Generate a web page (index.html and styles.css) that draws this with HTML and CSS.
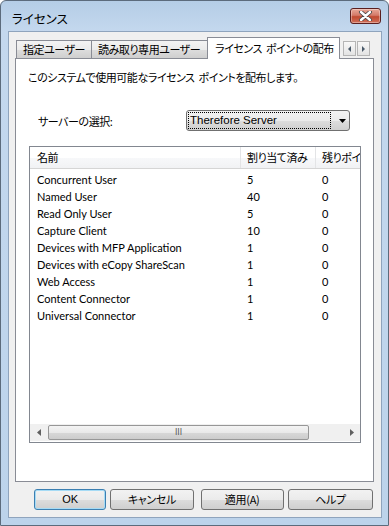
FILE: index.html
```html
<!DOCTYPE html>
<html lang="ja">
<head>
<meta charset="utf-8">
<title>ライセンス</title>
<link rel="stylesheet" href="styles.css">
</head>
<body>
<div class="window">
  <div class="titlebar">
    <span class="title">ライセンス</span>
    <span class="close">
      <svg width="17" height="10" viewBox="0 0 17 10">
        <path d="M4 1 L13 9 M13 1 L4 9" stroke="#444" stroke-width="4" stroke-linecap="round"/>
        <path d="M4 1 L13 9 M13 1 L4 9" stroke="#fff" stroke-width="2.4" stroke-linecap="round"/>
      </svg>
    </span>
  </div>
  <div class="client">
    <div class="tabs">
      <div class="tab t1">指定ユーザー</div>
      <div class="tab t2">読み取り専用ユーザー</div>
      <div class="tab sel">ライセンス ポイントの配布</div>
      <div class="tabscroll">
        <span class="sb"><svg width="5" height="6" viewBox="0 0 5 6"><path d="M4 0 L1 3 L4 6 Z" fill="#4a5a6a"/></svg></span>
        <span class="sb"><svg width="5" height="6" viewBox="0 0 5 6"><path d="M1 0 L4 3 L1 6 Z" fill="#4a5a6a"/></svg></span>
      </div>
    </div>
    <div class="panel">
      <p class="intro">このシステムで使用可能なライセンス ポイントを配布します。</p>
      <div class="server">
        <span class="label">サーバーの選択:</span>
        <div class="combo">
          <span class="focus">Therefore Server</span>
          <svg class="arrow" width="7" height="4" viewBox="0 0 7 4"><path d="M0 0 H7 L3.5 4 Z" fill="#000"/></svg>
        </div>
      </div>
      <div class="list">
        <div class="head">
          <div class="c1">名前</div>
          <div class="c2">割り当て済み</div>
          <div class="c3">残りポイ</div>
        </div>
        <div class="rows">
          <div class="row"><div class="c1">Concurrent User</div><div class="c2">5</div><div class="c3">0</div></div>
          <div class="row"><div class="c1">Named User</div><div class="c2">40</div><div class="c3">0</div></div>
          <div class="row"><div class="c1">Read Only User</div><div class="c2">5</div><div class="c3">0</div></div>
          <div class="row"><div class="c1">Capture Client</div><div class="c2">10</div><div class="c3">0</div></div>
          <div class="row"><div class="c1">Devices with MFP Application</div><div class="c2">1</div><div class="c3">0</div></div>
          <div class="row"><div class="c1">Devices with eCopy ShareScan</div><div class="c2">1</div><div class="c3">0</div></div>
          <div class="row"><div class="c1">Web Access</div><div class="c2">1</div><div class="c3">0</div></div>
          <div class="row"><div class="c1">Content Connector</div><div class="c2">1</div><div class="c3">0</div></div>
          <div class="row"><div class="c1">Universal Connector</div><div class="c2">1</div><div class="c3">0</div></div>
        </div>
        <div class="hscroll">
          <span class="harrow"><svg width="4" height="7" viewBox="0 0 4 7"><path d="M4 0 L0 3.5 L4 7 Z" fill="#606060"/></svg></span>
          <div class="thumb"><span class="grip">III</span></div>
          <span class="spacer"></span>
          <span class="harrow"><svg width="4" height="7" viewBox="0 0 4 7"><path d="M0 0 L4 3.5 L0 7 Z" fill="#606060"/></svg></span>
        </div>
      </div>
    </div>
    <div class="buttons">
      <button class="btn ok">OK</button>
      <button class="btn cancel">キャンセル</button>
      <button class="btn apply">適用(A)</button>
      <button class="btn help">ヘルプ</button>
    </div>
  </div>
</div>
</body>
</html>
```

FILE: styles.css
```css
html, body {
  margin: 0;
  padding: 0;
  background: #ffffff;
}
body {
  width: 389px;
  height: 526px;
  overflow: hidden;
  font-family: "Liberation Sans", "Noto Sans CJK JP", sans-serif;
  font-size: 12px;
  color: #000;
}
.window {
  box-sizing: border-box;
  width: 389px;
  height: 526px;
  border: 1px solid #5c6b7c;
  border-radius: 6px 6px 0 0;
  background: linear-gradient(to bottom, #b5cde6 0px, #c4d8ee 30px, #bcd3eb 100%);
  padding: 0 6px 7px 7px;
  display: flex;
  flex-direction: column;
}
.titlebar {
  height: 30px;
  display: flex;
  align-items: center;
  justify-content: space-between;
  flex: none;
}
.title {
  font-family: "Noto Sans CJK JP", sans-serif;
  font-size: 12.5px;
  margin-left: 4px;
  margin-top: 4px;
  font-feature-settings: "palt";
  color: #000;
}
.close {
  width: 31px;
  height: 16px;
  box-sizing: border-box;
  margin-right: 1px;
  margin-bottom: 1px;
  border: 1px solid #5a1f1f;
  border-radius: 3px;
  background: linear-gradient(to bottom, #e8a898 0%, #d47a68 45%, #c04a30 55%, #d0705a 100%);
  display: flex;
  align-items: center;
  justify-content: center;
  box-shadow: inset 0 0 0 1px rgba(255,255,255,0.35);
}
.close svg { display: block; }
.client {
  flex: 1;
  background: #f0f0f0;
  border: 1px solid #8fa4bd;
  display: flex;
  flex-direction: column;
  padding: 5px 8px 0 5px;
  font-family: "Noto Sans CJK JP", sans-serif;
  font-feature-settings: "palt";
  font-size: 11px;
  letter-spacing: -0.45px;
  word-spacing: 2px;
}
.tabs {
  height: 21px;
  display: flex;
  align-items: flex-end;
  padding-left: 2px;
  position: relative;
  z-index: 1;
  flex: none;
}
.tab {
  box-sizing: border-box;
  height: 18px;
  border: 1px solid #898c95;
  border-bottom: none;
  background: linear-gradient(to bottom, #f3f3f3 0%, #ebebeb 50%, #dddddd 51%, #cfcfcf 100%);
  padding: 0 0 0 6px;
  line-height: 16px;
  font-size: 11px;
  white-space: nowrap;
  margin-right: -1px;
  overflow: hidden;
}
.t1 { width: 76px; }
.t2 { width: 118px; }
.tab.sel {
  height: 22px;
  margin-bottom: -1px;
  background: #ffffff;
  width: 133px;
  line-height: 20px;
  padding: 0 0 0 7px;
  border-color: #898c95;
  margin-left: -1px;
}
.tabscroll {
  display: flex;
  margin-left: 4px;
  margin-bottom: 2px;
  gap: 1px;
}
.sb {
  box-sizing: border-box;
  width: 13px;
  height: 15px;
  border: 1px solid #b5b5b5;
  background: linear-gradient(to bottom, #f8f8f8, #e3e3e3);
  display: flex;
  align-items: center;
  justify-content: center;
}
.sb svg { display: block; }
.panel {
  box-sizing: border-box;
  width: 359px;
  height: 424px;
  margin-left: 1px;
  background: #ffffff;
  border: 1px solid #898c95;
  padding: 10px 12px 0 12px;
  flex: none;
}
.intro {
  margin: 0;
  line-height: 17px;
  height: 17px;
  font-size: 11px;
}
.server {
  display: flex;
  align-items: center;
  margin-top: 24px;
  height: 21px;
}
.label {
  width: 158px;
  padding-left: 10px;
  box-sizing: border-box;
  font-size: 11px;
}
.combo {
  box-sizing: border-box;
  width: 164px;
  height: 21px;
  border: 1px solid #707070;
  border-radius: 3px;
  background: linear-gradient(to bottom, #f2f2f2 0%, #ebebeb 50%, #dddddd 51%, #cfcfcf 100%);
  display: flex;
  align-items: center;
  padding: 0 0 0 1px;
  letter-spacing: 0;
  word-spacing: 0;
}
.focus {
  box-sizing: border-box;
  width: 143px;
  height: 17px;
  border: 1px dotted #000;
  font-family: "Liberation Sans", sans-serif;
  font-size: 11.5px;
  line-height: 15px;
  padding-left: 1px;
}
.arrow {
  margin-left: 8px;
  display: block;
}
.list {
  box-sizing: border-box;
  width: 332px;
  height: 297px;
  margin-left: 1px;
  margin-top: 15px;
  border: 1px solid #828790;
  display: flex;
  flex-direction: column;
  overflow: hidden;
}
.head {
  display: flex;
  height: 22px;
  flex: none;
  background: linear-gradient(to bottom, #ffffff 0%, #ffffff 50%, #f7f8fa 51%, #f1f2f4 100%);
  border-bottom: 1px solid #d5d5d5;
  box-sizing: border-box;
}
.head > div {
  line-height: 21px;
  font-size: 11px;
  box-sizing: border-box;
  border-right: 1px solid #e3e4e6;
  white-space: nowrap;
  overflow: hidden;
}
.c1 { width: 211px; padding-left: 7px; flex: none; }
.c2 { width: 75px; padding-left: 6px; flex: none; }
.c3 { width: 60px; padding-left: 6px; flex: none; }
.head > .c3 { border-right: none; }
.rows {
  flex: 1;
  padding-top: 2px;
}
.row {
  display: flex;
  height: 17px;
  line-height: 17px;
  font-family: "Lato", "Liberation Sans", sans-serif;
  font-size: 11px;
  letter-spacing: 0;
  word-spacing: 0;
  white-space: nowrap;
}
.row > div { box-sizing: border-box; }
.row .c1 { padding-left: 7px; }
.hscroll {
  height: 17px;
  flex: none;
  display: flex;
  align-items: center;
  background: #f0f0f0;
  margin-bottom: 1px;
}
.harrow {
  width: 17px;
  flex: none;
  display: flex;
  justify-content: center;
  align-items: center;
}
.harrow svg { display: block; }
.thumb {
  flex: none;
  width: 261px;
  height: 15px;
  box-sizing: border-box;
  border: 1px solid #979797;
  border-radius: 2px;
  background: linear-gradient(to bottom, #f4f4f4 0%, #e9e9e9 50%, #d8d8d8 51%, #cccccc 100%);
  display: flex;
  align-items: center;
  justify-content: center;
  margin-left: 1px;
}
.spacer { flex: 1; }
.grip {
  font-family: "DejaVu Sans", sans-serif;
  font-size: 8px;
  letter-spacing: 0;
  color: #555;
  line-height: 9px;
}
.buttons {
  display: flex;
  padding-top: 7px;
  padding-left: 20px;
}
.btn {
  box-sizing: border-box;
  height: 21px;
  border: 1px solid #707070;
  border-radius: 3px;
  background: linear-gradient(to bottom, #f2f2f2 0%, #ebebeb 50%, #dddddd 51%, #cfcfcf 100%);
  font-family: "Noto Sans CJK JP", sans-serif;
  font-feature-settings: "palt";
  font-size: 11px;
  letter-spacing: -0.3px;
  padding: 0;
  line-height: 17px;
  color: #000;
}
.ok {
  width: 73px;
  border-color: #3c7fb1;
  box-shadow: inset 0 0 0 1px #a6dbf5;
  font-family: "Liberation Sans", sans-serif;
  font-size: 11px;
  letter-spacing: 0;
}
.cancel { width: 84px; margin-left: 4px; }
.apply { width: 84px; margin-left: 7px; }
.help { width: 86px; margin-left: 4px; }
```
